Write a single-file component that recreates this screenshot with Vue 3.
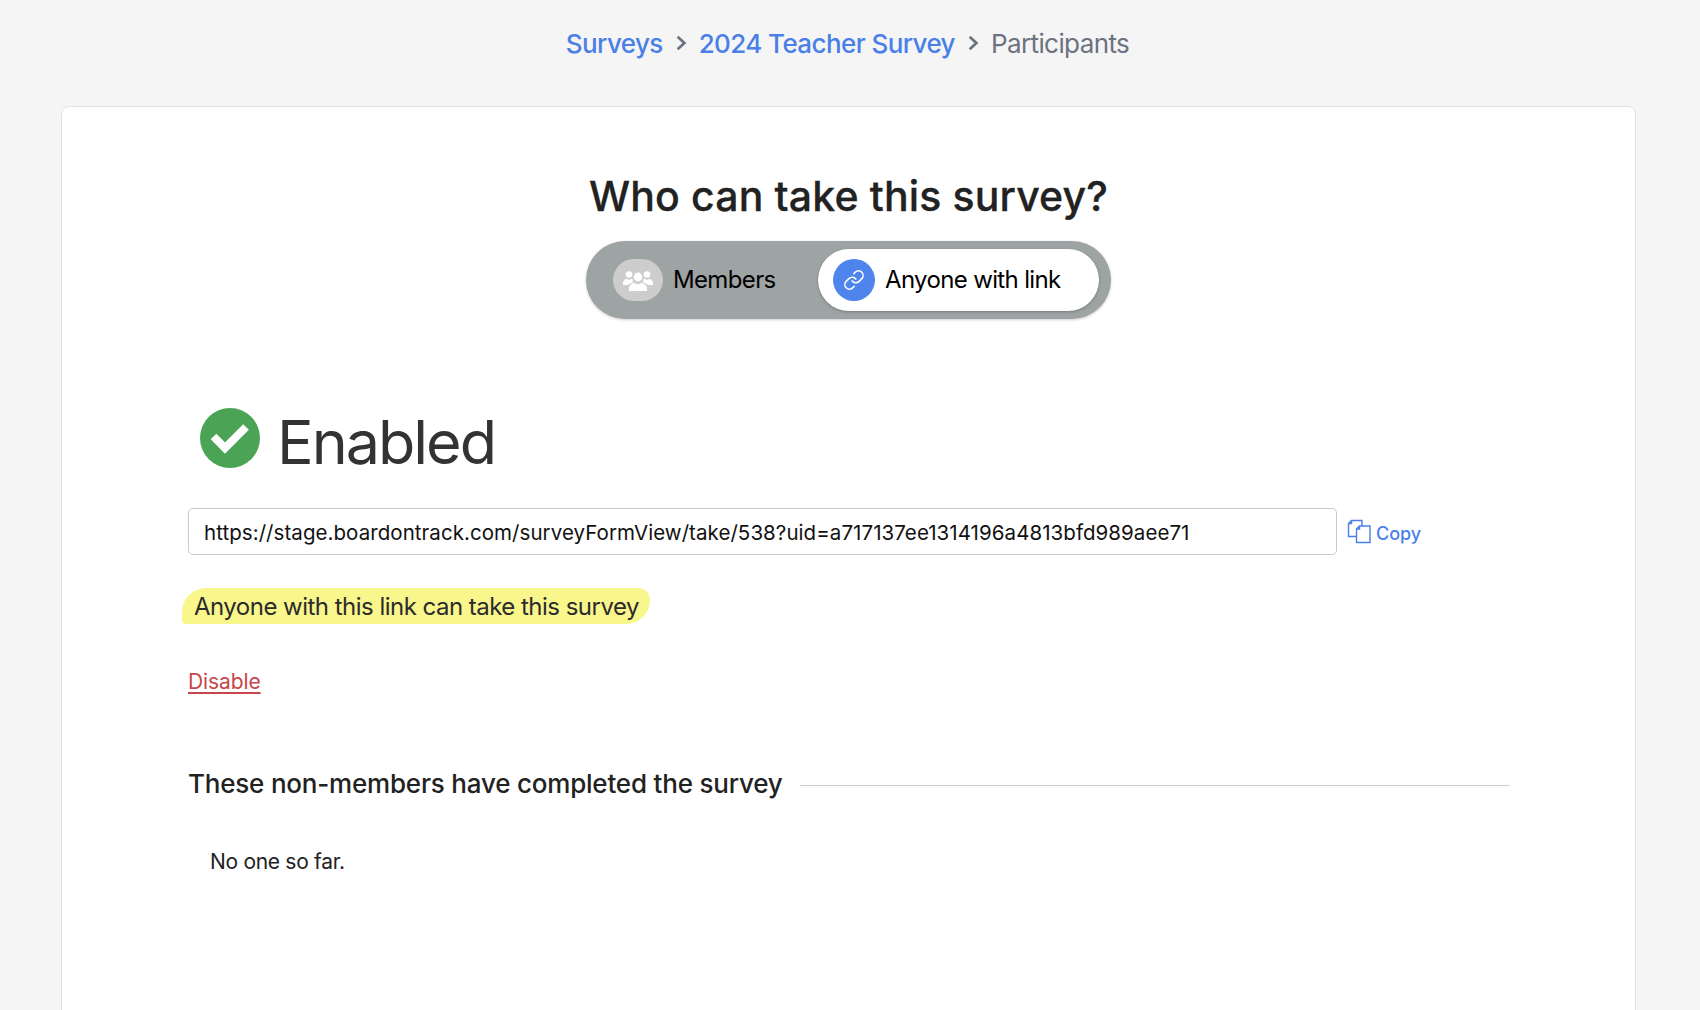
<script setup>
</script>
<template>
  <div class="page">
    <nav class="crumbs">
      <a class="link">Surveys</a>
      <svg class="chev" viewBox="0 0 12 16"><path d="M3 2.500 9 8l-6 5.500" /></svg>
      <a class="link">2024 Teacher Survey</a>
      <svg class="chev" viewBox="0 0 12 16"><path d="M3 2.500 9 8l-6 5.500" /></svg>
      <span class="cur">Participants</span>
    </nav>
    <main class="card">
      <h1>Who can take this survey?</h1>
      <div class="toggle">
        <div class="opt off">
          <span class="ic grey">
            <svg viewBox="0 0 30 21" width="30" height="21" fill="#fff">
              <circle cx="15" cy="7" r="4.400"/>
              <path d="M6 21v-2.500c0-3.500 3-5.300 5.500-5.800 1 1 2.200 1.400 3.500 1.400s2.500-.4 3.500-1.400c2.500.5 5.500 2.300 5.500 5.800V21z"/>
              <circle cx="6" cy="4.500" r="3.300"/>
              <circle cx="24" cy="4.500" r="3.300"/>
              <path d="M0 15v-2c0-2 1.700-3.700 3.800-4.200.7.700 1.400 1 2.200 1s1.500-.3 2.200-1c.6.200 1.100.4 1.600.7-.3 1.100-.2 2 .2 2.900C8 13.200 5.700 14 4.800 15z"/>
              <path d="M30 15v-2c0-2-1.700-3.700-3.800-4.200-.7.700-1.400 1-2.200 1s-1.500-.3-2.200-1c-.6.200-1.100.4-1.600.7.300 1.100.2 2-.2 2.900 2 .8 4.300 1.600 5.200 2.600z"/>
            </svg>
          </span>
          <span class="lbl">Members</span>
        </div>
        <div class="opt on">
          <span class="ic blue">
            <svg viewBox="0 0 24 24" width="22" height="22" fill="none" stroke="#fff" stroke-width="1.700" stroke-linecap="round" stroke-linejoin="round">
              <path d="M10 13a5 5 0 0 0 7.540.540l3-3a5 5 0 0 0-7.070-7.070l-1.720 1.710"/>
              <path d="M14 11a5 5 0 0 0-7.540-.540l-3 3a5 5 0 0 0 7.070 7.070l1.710-1.710"/>
            </svg>
          </span>
          <span class="lbl">Anyone with link</span>
        </div>
      </div>
      <div class="body">
        <div class="status">
          <svg viewBox="0 0 60 60" width="60" height="60">
            <circle cx="30" cy="30" r="30" fill="#4ba355"/>
            <path d="M13.500 28.500 25 40l21-21" fill="none" stroke="#fff" stroke-width="8"/>
          </svg>
          <span class="st">Enabled</span>
        </div>
        <div class="urlrow">
          <div class="url">https://stage.boardontrack.com/surveyFormView/take/538?uid=a717137ee1314196a4813bfd989aee71</div>
          <a class="copy">
            <svg viewBox="0 0 24 25" width="24" height="25" fill="none" stroke="#4a7fe8" stroke-width="1.400">
              <path d="M9 17.500H1.500V4.500l3-3H15v5.500"/>
              <path d="M4.500 1.500v3h-3"/>
              <path d="M9.500 10l3-3h10.500v16.500H9.500z"/>
              <path d="M12.500 7v3h-3"/>
            </svg>
            <span class="copytext">Copy</span>
          </a>
        </div>
        <div class="note"><span>Anyone with this link can take this survey</span></div>
        <a class="disable">Disable</a>
        <div class="section"><h2>These non-members have completed the survey</h2><i></i></div>
        <p class="none">No one so far.</p>
      </div>
    </main>
  </div>
</template>
<style>
html, body { margin: 0; background: #f5f5f5; overflow: hidden; }
</style>
<style scoped>
.page { height: 1010px; overflow: hidden; background: #f5f5f5; font-family: Inter, "Noto Sans", sans-serif; color: #222; }
.crumbs { height: 86px; padding: 0 5px 2px 0; display: flex; align-items: center; justify-content: center; gap: 11px; font-size: 26px; letter-spacing: -.6px; }
.link { color: #4a7fe8; font-weight: 500; }
.cur { color: #6b7280; }
.chev { width: 14px; height: 18px; fill: none; stroke: #6b7280; stroke-width: 2.400; }
.card { margin: 18px 64px 0 61px; height: 1000px; box-sizing: border-box; background: #fff; border: 1px solid #e2e2e2; border-radius: 8px; display: flex; flex-direction: column; align-items: center; padding-top: 64px; }
h1 { margin: 0; font-size: 41px; line-height: 50px; font-weight: 500; color: #222; letter-spacing: .15px; -webkit-text-stroke: .3px #222; }
.toggle { margin-top: 20px; width: 525px; height: 78px; box-sizing: border-box; background: #9ea3a3; border-radius: 39px; display: flex; align-items: center; padding: 0 12px 0 27px; justify-content: space-between; box-shadow: 0 1px 3px rgba(0,0,0,.2); font-size: 24px; letter-spacing: -.65px; color: #000; }
.opt { display: flex; align-items: center; gap: 10px; }
.lbl { margin-bottom: 2px; }
.on { background: #fff; width: 281px; height: 62px; border-radius: 31px; padding-left: 15px; box-sizing: border-box; box-shadow: 0 1px 3px rgba(0,0,0,.25); }
.ic { display: flex; align-items: center; justify-content: center; }
.grey { width: 50px; height: 42px; border-radius: 21px; background: #cdcdcd; }
.blue { width: 42px; height: 42px; border-radius: 50%; background: #4f84ec; }
.body { align-self: stretch; padding: 87px 125px 0 126px; }
.status { display: flex; align-items: center; gap: 17px; padding-left: 12px; font-size: 61px; line-height: 56px; color: #333; }
.st { margin-top: 8px; letter-spacing: -2px; }
.urlrow { margin-top: 38px; display: flex; align-items: center; gap: 10px; }
.url { width: 1149px; height: 47px; box-sizing: border-box; border: 1px solid #c9c9c9; border-radius: 5px; padding: 0 15px; line-height: 47px; font-size: 20.500px; letter-spacing: .06px; color: #111; white-space: nowrap; }
.copy { display: flex; align-items: center; gap: 5px; color: #4a7fe8; font-size: 18px; font-weight: 500; }
.copytext { padding-top: 4px; }
.note { margin-top: 33px; margin-left: -6px; }
.note span { display: inline-block; background: #f9f68c; border-radius: 24px 12px 24px 4px; padding: 1px 11px 0 12px; line-height: 35px; font-size: 24px; letter-spacing: -.52px; color: #2b2b2b; }
.disable { display: block; margin-top: 44px; font-size: 21px; line-height: 28px; letter-spacing: -.1px; color: #c6464a; text-decoration: underline; text-decoration-thickness: 2px; text-underline-offset: 3px; }
.section { margin-top: 71px; display: flex; align-items: center; gap: 17px; }
h2 { margin: 0; font-size: 26px; line-height: 34px; font-weight: 500; color: #222; white-space: nowrap; letter-spacing: -.2px; }
.section i { flex: 1; height: 1px; background: #cfcfcf; margin-top: 3px; }
.none { margin: 47px 0 0 22px; font-size: 21px; line-height: 28px; letter-spacing: -.3px; color: #222; }
</style>
